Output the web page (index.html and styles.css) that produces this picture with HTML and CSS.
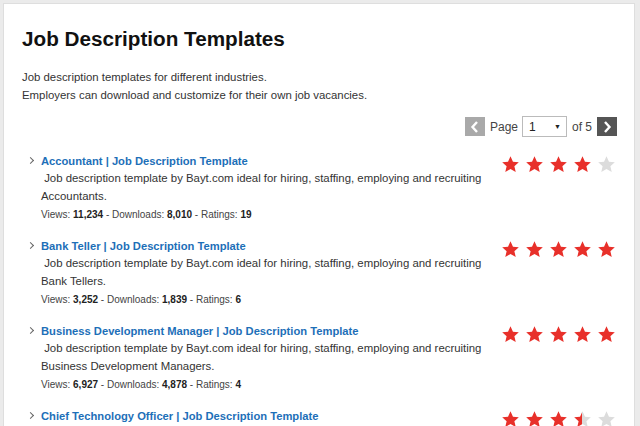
FILE: index.html
```html
<!DOCTYPE html>
<html>
<head>
<meta charset="utf-8">
<link rel="stylesheet" href="styles.css">
</head>
<body>
<div class="panel">
  <h1 class="title">Job Description Templates</h1>
  <p class="intro">Job description templates for different industries.<br>Employers can download and customize for their own job vacancies.</p>
  <div class="pager">
    <span class="pbtn prev"><svg width="10" height="12" viewBox="0 0 10 12"><path d="M7 1 L2.5 6 L7 11" fill="none" stroke="#fff" stroke-width="2.4"/></svg></span>
    <span class="plabel page">Page</span>
    <span class="select">1<span class="caret">▼</span></span>
    <span class="plabel of">of 5</span>
    <span class="pbtn next"><svg width="10" height="12" viewBox="0 0 10 12"><path d="M3 1 L7.5 6 L3 11" fill="none" stroke="#fff" stroke-width="2.4"/></svg></span>
  </div>
  <ul class="list">
    <li class="item">
      <div class="info">
        <a class="link" href="#">Accountant | Job Description Template</a>
        <p class="desc">&nbsp;Job description template by Bayt.com ideal for hiring, staffing, employing and recruiting Accountants.</p>
        <p class="stats">Views: <b>11,234</b> - Downloads: <b>8,010</b> - Ratings: <b>19</b></p>
      </div>
      <div class="stars">
        <svg class="star on" viewBox="0 0 24 24"><path d="M12 1.5l3.1 6.9 7.4.7-5.6 5 1.7 7.4L12 17.6l-6.6 3.9 1.7-7.4-5.6-5 7.4-.7z"/></svg>
        <svg class="star on" viewBox="0 0 24 24"><path d="M12 1.5l3.1 6.9 7.4.7-5.6 5 1.7 7.4L12 17.6l-6.6 3.9 1.7-7.4-5.6-5 7.4-.7z"/></svg>
        <svg class="star on" viewBox="0 0 24 24"><path d="M12 1.5l3.1 6.9 7.4.7-5.6 5 1.7 7.4L12 17.6l-6.6 3.9 1.7-7.4-5.6-5 7.4-.7z"/></svg>
        <svg class="star on" viewBox="0 0 24 24"><path d="M12 1.5l3.1 6.9 7.4.7-5.6 5 1.7 7.4L12 17.6l-6.6 3.9 1.7-7.4-5.6-5 7.4-.7z"/></svg>
        <svg class="star off" viewBox="0 0 24 24"><path d="M12 1.5l3.1 6.9 7.4.7-5.6 5 1.7 7.4L12 17.6l-6.6 3.9 1.7-7.4-5.6-5 7.4-.7z"/></svg>
      </div>
    </li>
    <li class="item">
      <div class="info">
        <a class="link" href="#">Bank Teller | Job Description Template</a>
        <p class="desc">&nbsp;Job description template by Bayt.com ideal for hiring, staffing, employing and recruiting Bank Tellers.</p>
        <p class="stats">Views: <b>3,252</b> - Downloads: <b>1,839</b> - Ratings: <b>6</b></p>
      </div>
      <div class="stars">
        <svg class="star on" viewBox="0 0 24 24"><path d="M12 1.5l3.1 6.9 7.4.7-5.6 5 1.7 7.4L12 17.6l-6.6 3.9 1.7-7.4-5.6-5 7.4-.7z"/></svg>
        <svg class="star on" viewBox="0 0 24 24"><path d="M12 1.5l3.1 6.9 7.4.7-5.6 5 1.7 7.4L12 17.6l-6.6 3.9 1.7-7.4-5.6-5 7.4-.7z"/></svg>
        <svg class="star on" viewBox="0 0 24 24"><path d="M12 1.5l3.1 6.9 7.4.7-5.6 5 1.7 7.4L12 17.6l-6.6 3.9 1.7-7.4-5.6-5 7.4-.7z"/></svg>
        <svg class="star on" viewBox="0 0 24 24"><path d="M12 1.5l3.1 6.9 7.4.7-5.6 5 1.7 7.4L12 17.6l-6.6 3.9 1.7-7.4-5.6-5 7.4-.7z"/></svg>
        <svg class="star on" viewBox="0 0 24 24"><path d="M12 1.5l3.1 6.9 7.4.7-5.6 5 1.7 7.4L12 17.6l-6.6 3.9 1.7-7.4-5.6-5 7.4-.7z"/></svg>
      </div>
    </li>
    <li class="item">
      <div class="info">
        <a class="link" href="#">Business Development Manager | Job Description Template</a>
        <p class="desc">&nbsp;Job description template by Bayt.com ideal for hiring, staffing, employing and recruiting Business Development Managers.</p>
        <p class="stats">Views: <b>6,927</b> - Downloads: <b>4,878</b> - Ratings: <b>4</b></p>
      </div>
      <div class="stars">
        <svg class="star on" viewBox="0 0 24 24"><path d="M12 1.5l3.1 6.9 7.4.7-5.6 5 1.7 7.4L12 17.6l-6.6 3.9 1.7-7.4-5.6-5 7.4-.7z"/></svg>
        <svg class="star on" viewBox="0 0 24 24"><path d="M12 1.5l3.1 6.9 7.4.7-5.6 5 1.7 7.4L12 17.6l-6.6 3.9 1.7-7.4-5.6-5 7.4-.7z"/></svg>
        <svg class="star on" viewBox="0 0 24 24"><path d="M12 1.5l3.1 6.9 7.4.7-5.6 5 1.7 7.4L12 17.6l-6.6 3.9 1.7-7.4-5.6-5 7.4-.7z"/></svg>
        <svg class="star on" viewBox="0 0 24 24"><path d="M12 1.5l3.1 6.9 7.4.7-5.6 5 1.7 7.4L12 17.6l-6.6 3.9 1.7-7.4-5.6-5 7.4-.7z"/></svg>
        <svg class="star on" viewBox="0 0 24 24"><path d="M12 1.5l3.1 6.9 7.4.7-5.6 5 1.7 7.4L12 17.6l-6.6 3.9 1.7-7.4-5.6-5 7.4-.7z"/></svg>
      </div>
    </li>
    <li class="item">
      <div class="info">
        <a class="link" href="#">Chief Technology Officer | Job Description Template</a>
      </div>
      <div class="stars">
        <svg class="star on" viewBox="0 0 24 24"><path d="M12 1.5l3.1 6.9 7.4.7-5.6 5 1.7 7.4L12 17.6l-6.6 3.9 1.7-7.4-5.6-5 7.4-.7z"/></svg>
        <svg class="star on" viewBox="0 0 24 24"><path d="M12 1.5l3.1 6.9 7.4.7-5.6 5 1.7 7.4L12 17.6l-6.6 3.9 1.7-7.4-5.6-5 7.4-.7z"/></svg>
        <svg class="star on" viewBox="0 0 24 24"><path d="M12 1.5l3.1 6.9 7.4.7-5.6 5 1.7 7.4L12 17.6l-6.6 3.9 1.7-7.4-5.6-5 7.4-.7z"/></svg>
        <svg class="star half" viewBox="0 0 24 24"><defs><linearGradient id="hg"><stop offset="50%" stop-color="#e8302a"/><stop offset="50%" stop-color="#dcdcdc"/></linearGradient></defs><path fill="url(#hg)" d="M12 1.5l3.1 6.9 7.4.7-5.6 5 1.7 7.4L12 17.6l-6.6 3.9 1.7-7.4-5.6-5 7.4-.7z"/></svg>
        <svg class="star off" viewBox="0 0 24 24"><path d="M12 1.5l3.1 6.9 7.4.7-5.6 5 1.7 7.4L12 17.6l-6.6 3.9 1.7-7.4-5.6-5 7.4-.7z"/></svg>
      </div>
    </li>
  </ul>
</div>
</body>
</html>
```

FILE: styles.css
```css
html, body {
  margin: 0;
  padding: 0;
  background: #ebebeb;
  height: 100%;
  overflow: hidden;
}
body {
  font-family: "Liberation Sans", Arial, sans-serif;
  color: #333;
}
.panel {
  margin: 3px 5px 0 3px;
  background: #fff;
  border: 1px solid #dedede;
  border-bottom: none;
  padding: 20px 17px 0 18px;
  height: 500px;
  box-sizing: border-box;
}
.title {
  margin: 0;
  font-size: 20.7px;
  font-weight: bold;
  color: #111;
  line-height: 30px;
}
.intro {
  margin: 14px 0 0 0;
  font-size: 11.4px;
  line-height: 18px;
  color: #333;
}
.pager {
  display: flex;
  justify-content: flex-end;
  align-items: center;
  margin-top: 12px;
  font-size: 12px;
  color: #444;
}
.pbtn {
  width: 20px;
  height: 19px;
  display: flex;
  align-items: center;
  justify-content: center;
}
.prev { background: #a9a9a9; }
.next { background: #555; }
.plabel.page { margin: 0 4px 0 5px; }
.plabel.of { margin: 0 5px 0 5px; }
.select {
  width: 45px;
  height: 21px;
  box-sizing: border-box;
  border: 1px solid #bbb;
  display: flex;
  align-items: center;
  justify-content: space-between;
  padding: 0 5px 0 6px;
  font-size: 12px;
  color: #222;
}
.caret { font-size: 7px; color: #222; }
.list {
  list-style: none;
  margin: 17px 0 0 0;
  padding: 0;
}
.item {
  display: flex;
  justify-content: space-between;
  height: 85px;
}
.info {
  position: relative;
  padding-left: 19px;
  width: 445px;
}
.info::before {
  content: "";
  position: absolute;
  left: 6px;
  top: 4px;
  width: 4px;
  height: 4px;
  border-top: 1px solid #666;
  border-right: 1px solid #666;
  transform: rotate(45deg);
}
.link {
  display: block;
  font-size: 11.2px;
  font-weight: bold;
  color: #1d6fb8;
  text-decoration: none;
  line-height: 14px;
}
.desc {
  margin: 1px 0 0 0;
  font-size: 11.4px;
  line-height: 18px;
  color: #333;
}
.stats {
  margin: 3px 0 0 0;
  font-size: 10px;
  line-height: 14px;
  color: #444;
}
.stats b { color: #222; }
.stars {
  display: flex;
  gap: 5px;
  padding-top: 1px;
  margin-right: 1px;
}
.star { width: 19px; height: 19px; }
.star.on path { fill: #e8302a; }
.star.off path { fill: #dcdcdc; }
```
